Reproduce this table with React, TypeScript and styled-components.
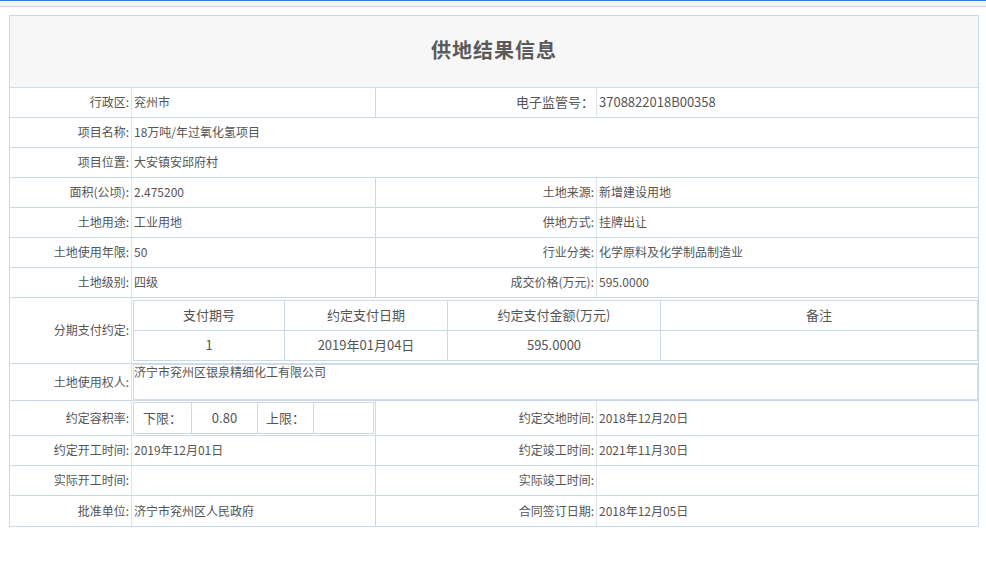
import React from "react";
import styled, { createGlobalStyle } from "styled-components";

const GlobalStyle = createGlobalStyle`
  html, body { margin: 0; padding: 0; background: #fff; }
  body { font-family: "Noto Sans CJK SC", "Liberation Sans", sans-serif; color: #555; }
  * { box-sizing: border-box; }
`;

const LINE = "#cdd9e6";
const VLINE = "#dde4ec";

const TopBar = styled.div`
  height: 7px;
  border-top: 1px solid #2f7fd6;
  border-bottom: 1px solid #d2d2d2;
  background: #f3f6f9;
`;

const Sheet = styled.div`
  width: 970px;
  margin: 8px 0 0 9px;
  border: 1px solid ${LINE};
`;

const Title = styled.div`
  height: 72px;
  border-bottom: 1px solid ${LINE};
  background: #f7f7f7;
  display: flex;
  align-items: center;
  justify-content: center;
  font-size: 20px;
  font-weight: bold;
  letter-spacing: 1px;
  color: #5a5a5a;
  padding-bottom: 4px;
`;

const Row = styled.div<{ $h?: number }>`
  display: grid;
  grid-template-columns: 122px 244px 221px 1fr;
  height: ${(p) => p.$h ?? 30}px;
  border-bottom: 1px solid ${LINE};
  &:last-child { border-bottom: none; }
`;

const Label = styled.div<{ $size?: number }>`
  display: flex;
  align-items: center;
  justify-content: flex-end;
  padding: 0 2px 2px 0;
  border-right: 1px solid ${VLINE};
  font-size: ${(p) => p.$size ?? 12}px;
  color: #555;
  white-space: nowrap;
`;

const Value = styled.div<{ $span?: boolean; $size?: number; $edge?: boolean }>`
  display: flex;
  align-items: center;
  padding: 0 0 2px 2px;
  font-size: ${(p) => p.$size ?? 12}px;
  color: #555;
  white-space: nowrap;
  border-right: ${(p) => (p.$edge ? `1px solid ${LINE}` : "none")};
  grid-column: ${(p) => (p.$span ? "span 3" : "auto")};
`;

const Holder = styled.div<{ $span?: boolean; $edge?: boolean }>`
  display: flex;
  align-items: flex-start;
  padding: 2px 0 0 1px;
  grid-column: ${(p) => (p.$span ? "span 3" : "auto")};
  border-right: ${(p) => (p.$edge ? `1px solid ${LINE}` : "none")};
`;

const PayTable = styled.div`
  width: 845px;
  border: 1px solid #c8d9ea;
  display: grid;
  grid-template-columns: 151px 163px 213px 1fr;
`;

const PayCell = styled.div<{ $head?: boolean; $last?: boolean }>`
  height: ${(p) => (p.$head ? 30 : 29)}px;
  border-bottom: ${(p) => (p.$head ? "1px solid #c8d9ea" : "none")};
  border-right: ${(p) => (p.$last ? "none" : "1px solid #c8d9ea")};
  display: flex;
  align-items: center;
  justify-content: center;
  padding-bottom: 2px;
  font-size: 13px;
  color: #555;
  white-space: nowrap;
`;

const OwnerBox = styled.div`
  width: 845px;
  height: 36px;
  margin: -2px 0 0 0;
  border: 1px solid #d3deea;
  font-size: 12px;
  color: #555;
  padding: 0;
  line-height: 14px;
`;

const RatioTable = styled.div`
  width: 241px;
  height: 32px;
  margin-top: -1px;
  border: 1px solid #c8d9ea;
  display: grid;
  grid-template-columns: 58px 66px 56px 1fr;
`;

const RatioCell = styled.div<{ $last?: boolean }>`
  border-right: ${(p) => (p.$last ? "none" : "1px solid #c8d9ea")};
  display: flex;
  align-items: center;
  justify-content: center;
  padding-bottom: 2px;
  font-size: 13px;
  color: #555;
  white-space: nowrap;
`;

type Pair = [string, string, string, string];

const upper: Pair[] = [
  ["面积(公顷):", "2.475200", "土地来源:", "新增建设用地"],
  ["土地用途:", "工业用地", "供地方式:", "挂牌出让"],
  ["土地使用年限:", "50", "行业分类:", "化学原料及化学制品制造业"],
  ["土地级别:", "四级", "成交价格(万元):", "595.0000"],
];

const lower: Pair[] = [
  ["约定开工时间:", "2019年12月01日", "约定竣工时间:", "2021年11月30日"],
  ["实际开工时间:", "", "实际竣工时间:", ""],
  ["批准单位:", "济宁市兖州区人民政府", "合同签订日期:", "2018年12月05日"],
];

const payHead = ["支付期号", "约定支付日期", "约定支付金额(万元)", "备注"];
const payRow = ["1", "2019年01月04日", "595.0000", ""];

export default function App() {
  return (
    <>
      <GlobalStyle />
      <TopBar />
      <Sheet>
        <Title>供地结果信息</Title>
        <Row>
          <Label>行政区:</Label>
          <Value $edge>兖州市</Value>
          <Label $size={13}>电子监管号：</Label>
          <Value $size={13}>3708822018B00358</Value>
        </Row>
        <Row>
          <Label>项目名称:</Label>
          <Value $span>18万吨/年过氧化氢项目</Value>
        </Row>
        <Row>
          <Label>项目位置:</Label>
          <Value $span>大安镇安邱府村</Value>
        </Row>
        {upper.map(([a, b, c, d]) => (
          <Row key={a}>
            <Label>{a}</Label>
            <Value $edge>{b}</Value>
            <Label>{c}</Label>
            <Value>{d}</Value>
          </Row>
        ))}
        <Row $h={66}>
          <Label>分期支付约定:</Label>
          <Holder $span>
            <PayTable>
              {payHead.map((h, i) => (
                <PayCell key={h} $head $last={i === 3}>{h}</PayCell>
              ))}
              {payRow.map((v, i) => (
                <PayCell key={i} $last={i === 3}>{v}</PayCell>
              ))}
            </PayTable>
          </Holder>
        </Row>
        <Row $h={37}>
          <Label>土地使用权人:</Label>
          <Holder $span>
            <OwnerBox>济宁市兖州区银泉精细化工有限公司</OwnerBox>
          </Holder>
        </Row>
        <Row $h={35}>
          <Label>约定容积率:</Label>
          <Holder $edge>
            <RatioTable>
              <RatioCell>下限：</RatioCell>
              <RatioCell>0.80</RatioCell>
              <RatioCell>上限：</RatioCell>
              <RatioCell $last />
            </RatioTable>
          </Holder>
          <Label>约定交地时间:</Label>
          <Value>2018年12月20日</Value>
        </Row>
        {lower.map(([a, b, c, d]) => (
          <Row key={a}>
            <Label>{a}</Label>
            <Value $edge>{b}</Value>
            <Label>{c}</Label>
            <Value>{d}</Value>
          </Row>
        ))}
      </Sheet>
    </>
  );
}
